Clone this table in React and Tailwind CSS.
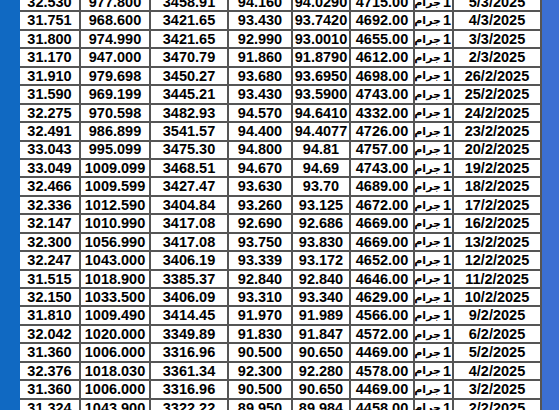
const rows = [
  ["32.530", "977.800", "3458.91", "94.160", "94.0290", "4715.00", "5/3/2025"],
  ["31.751", "968.600", "3421.65", "93.430", "93.7420", "4692.00", "4/3/2025"],
  ["31.800", "974.990", "3421.65", "92.990", "93.0010", "4655.00", "3/3/2025"],
  ["31.170", "947.000", "3470.79", "91.860", "91.8790", "4612.00", "2/3/2025"],
  ["31.910", "979.698", "3450.27", "93.680", "93.6950", "4698.00", "26/2/2025"],
  ["31.590", "969.199", "3445.21", "93.430", "93.5900", "4743.00", "25/2/2025"],
  ["32.275", "970.598", "3482.93", "94.570", "94.6410", "4332.00", "24/2/2025"],
  ["32.491", "986.899", "3541.57", "94.400", "94.4077", "4726.00", "23/2/2025"],
  ["33.043", "995.099", "3475.30", "94.800", "94.81", "4757.00", "20/2/2025"],
  ["33.049", "1009.099", "3468.51", "94.670", "94.69", "4743.00", "19/2/2025"],
  ["32.466", "1009.599", "3427.47", "93.630", "93.70", "4689.00", "18/2/2025"],
  ["32.336", "1012.590", "3404.84", "93.260", "93.125", "4672.00", "17/2/2025"],
  ["32.147", "1010.990", "3417.08", "92.690", "92.686", "4669.00", "16/2/2025"],
  ["32.300", "1056.990", "3417.08", "93.750", "93.830", "4669.00", "13/2/2025"],
  ["32.247", "1043.000", "3406.19", "93.339", "93.172", "4652.00", "12/2/2025"],
  ["31.515", "1018.900", "3385.37", "92.840", "92.840", "4646.00", "11/2/2025"],
  ["32.150", "1033.500", "3406.09", "93.310", "93.340", "4629.00", "10/2/2025"],
  ["31.810", "1009.490", "3414.45", "91.970", "91.989", "4566.00", "9/2/2025"],
  ["32.042", "1020.000", "3349.89", "91.830", "91.847", "4572.00", "6/2/2025"],
  ["31.360", "1006.000", "3316.96", "90.500", "90.650", "4469.00", "5/2/2025"],
  ["32.376", "1018.030", "3361.34", "92.300", "92.280", "4578.00", "4/2/2025"],
  ["31.360", "1006.000", "3316.96", "90.500", "90.650", "4469.00", "3/2/2025"],
  ["31.324", "1043.900", "3322.22", "89.950", "89.984", "4458.00", "2/2/2025"],
]

const cell = "flex items-center justify-center border-r-2 border-[#555] h-full"

export default function App() {
  return (
    <div className="w-[559px] h-[410px] overflow-hidden flex bg-white font-['Liberation_Sans','DejaVu_Sans',sans-serif] font-bold text-[14.5px] text-black leading-none">
      <div className="w-[20px] shrink-0 bg-[#1069c2]" />
      <div className="w-[522px] shrink-0 mt-[-6px]">
        {rows.map((r, i) => (
          <div key={i} className="flex h-[18.45px] border-b-2 border-[#555]">
            <div className={`${cell} w-[61px]`}>{r[0]}</div>
            <div className={`${cell} w-[70px]`}>{r[1]}</div>
            <div className={`${cell} w-[78px]`}>{r[2]}</div>
            <div className={`${cell} w-[64px]`}>{r[3]}</div>
            <div className={`${cell} w-[58px]`}>{r[4]}</div>
            <div className={`${cell} w-[64px]`}>{r[5]}</div>
            <div
              dir="rtl"
              className="flex items-center justify-start pr-[1px] border-r-2 border-[#555] h-full w-[39px] whitespace-nowrap overflow-hidden"
            >
              <span>1</span>
              <span className="text-[11px] mr-[2px]">جرام</span>
            </div>
            <div className={`${cell} w-[88px]`}>{r[6]}</div>
          </div>
        ))}
      </div>
      <div className="flex-1 bg-[#3b6fd2]" />
    </div>
  )
}
